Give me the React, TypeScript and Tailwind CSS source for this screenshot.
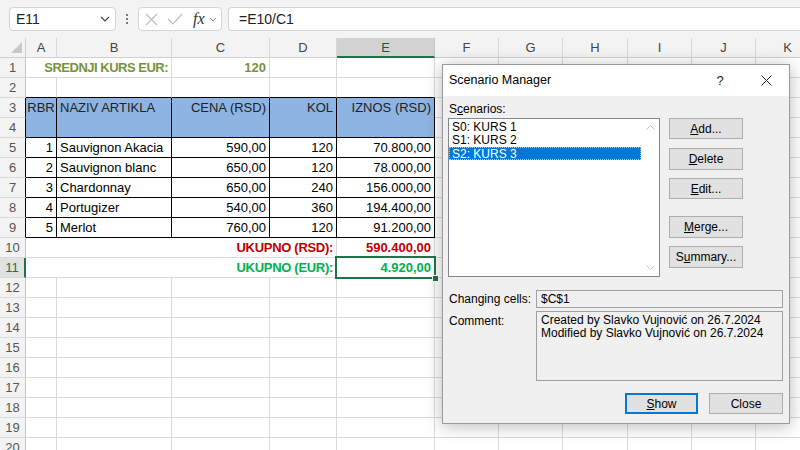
import React from "react";

const W: Record<string, string> = {
  A: "w-[31px]",
  B: "w-[115px]",
  C: "w-[98px]",
  D: "w-[67px]",
  E: "w-[98px]",
  F: "w-[64px]",
  G: "w-[64px]",
  H: "w-[65px]",
  I: "w-[64px]",
  J: "w-[64px]",
  K: "w-[64px]",
};
const COLS = ["A", "B", "C", "D", "E", "F", "G", "H", "I", "J", "K"];
const REST = ["F", "G", "H", "I", "J", "K"];

const g = "border-r-[#dadada]";
const gb = "border-b-[#dadada]";
const K = "border-r-black";
const Kb = "border-b-black";

function Cell({
  w,
  r = g,
  b = gb,
  h = "h-[20px]",
  cls = "",
  children,
}: {
  w: string;
  r?: string;
  b?: string;
  h?: string;
  cls?: string;
  children?: React.ReactNode;
}) {
  return (
    <div
      className={`shrink-0 border-r border-b leading-[19px] text-[13px] whitespace-nowrap overflow-hidden ${w} ${h} ${r} ${b} ${cls}`}
    >
      {children}
    </div>
  );
}

function RH({ n, r = "border-r-[#c6c6c6]", sel = false }: { n: number; r?: string; sel?: boolean }) {
  if (sel) {
    return (
      <div className="shrink-0 w-[26px] h-[20px] leading-[19px] border-b border-b-[#dadada] border-r-2 border-r-[#217346] bg-[#e1e1e1] text-[#217346] text-center text-[13px]">
        {n}
      </div>
    );
  }
  return (
    <div
      className={`shrink-0 w-[26px] h-[20px] leading-[19px] border-r border-b border-b-[#dadada] ${r} bg-[#f3f3f3] text-[#555] text-center text-[13px]`}
    >
      {n}
    </div>
  );
}

function Rest() {
  return (
    <>
      {REST.map((c) => (
        <Cell key={c} w={W[c]} />
      ))}
    </>
  );
}

const data = [
  ["1", "Sauvignon Akacia", "590,00", "120", "70.800,00"],
  ["2", "Sauvignon blanc", "650,00", "120", "78.000,00"],
  ["3", "Chardonnay", "650,00", "240", "156.000,00"],
  ["4", "Portugizer", "540,00", "360", "194.400,00"],
  ["5", "Merlot", "760,00", "120", "91.200,00"],
];

function Btn({ children, cls = "" }: { children: React.ReactNode; cls?: string }) {
  return (
    <div
      className={`w-[74px] flex items-center justify-center bg-[#e1e1e1] border border-[#adadad] text-[12px] text-black ${cls}`}
    >
      {children}
    </div>
  );
}

export default function App() {
  return (
    <div className="w-[800px] h-[450px] overflow-hidden relative bg-white font-['Liberation_Sans',Arial,sans-serif] text-black">
      {/* Formula bar */}
      <div className="h-[38px] bg-[#f3f3f3] flex items-center pl-[9px]">
        <div className="w-[107px] h-[24px] bg-white border border-[#d4d4d4] rounded-[4px] flex items-center justify-between pl-[6px] pr-[5px]">
          <span className="text-[14px] text-[#222]">E11</span>
          <svg width="10" height="6" viewBox="0 0 10 6">
            <polyline points="1,1 5,5 9,1" fill="none" stroke="#444" strokeWidth="1.2" />
          </svg>
        </div>
        <div className="w-[22px] flex flex-col items-center gap-[2px]">
          <div className="w-[2px] h-[2px] bg-[#555] rounded-full" />
          <div className="w-[2px] h-[2px] bg-[#555] rounded-full" />
          <div className="w-[2px] h-[2px] bg-[#555] rounded-full" />
        </div>
        <div className="w-[84px] h-[24px] bg-white border border-[#d4d4d4] rounded-[4px] flex items-center pl-[6px]">
          <svg width="13" height="13" viewBox="0 0 13 13">
            <line x1="1" y1="1" x2="12" y2="12" stroke="#bdbdbd" strokeWidth="1.2" />
            <line x1="12" y1="1" x2="1" y2="12" stroke="#bdbdbd" strokeWidth="1.2" />
          </svg>
          <svg width="16" height="12" viewBox="0 0 16 12" className="ml-[9px]">
            <polyline points="1,6 6,11 15,1" fill="none" stroke="#bdbdbd" strokeWidth="1.2" />
          </svg>
          <span className="ml-[10px] font-['Liberation_Serif',serif] italic text-[16px] text-[#333] leading-none">
            fx
          </span>
          <svg width="8" height="5" viewBox="0 0 8 5" className="ml-[4px]">
            <polyline points="1,1 4,4 7,1" fill="none" stroke="#888" strokeWidth="1" />
          </svg>
        </div>
        <div className="ml-[6px] flex-1 h-[24px] bg-white border border-r-0 border-[#d4d4d4] rounded-l-[4px] flex items-center pl-[10px]">
          <span className="text-[14px] text-[#222]">=E10/C1</span>
        </div>
      </div>

      {/* Column headers */}
      <div className="flex h-[20px]">
        <div className="shrink-0 w-[26px] h-[20px] bg-[#f3f3f3] border-r border-b border-r-[#d0d0d0] border-b-[#d0d0d0] relative">
          <svg width="26" height="20" viewBox="0 0 26 20" className="absolute left-0 top-0">
            <polygon points="11,15 22,15 22,4" fill="#c8c8c8" />
          </svg>
        </div>
        {COLS.map((c) =>
          c === "E" ? (
            <div
              key={c}
              className={`shrink-0 ${W[c]} h-[20px] bg-[#d2d2d2] border-r border-r-[#c8c8c8] border-b-2 border-b-[#217346] text-center text-[13px] leading-[19px] text-[#1f5a3a]`}
            >
              {c}
            </div>
          ) : (
            <div
              key={c}
              className={`shrink-0 ${W[c]} h-[20px] bg-[#f3f3f3] border-r border-b border-r-[#d8d8d8] border-b-[#d0d0d0] text-center text-[13px] leading-[19px] text-[#444]`}
            >
              {c}
            </div>
          )
        )}
      </div>

      {/* Row 1 */}
      <div className="flex">
        <RH n={1} />
        <Cell w="w-[146px]" cls="text-right pr-[3px] font-bold text-[#76923c] tracking-[-0.5px]">
          SREDNJI KURS EUR:
        </Cell>
        <Cell w={W.C} cls="text-right pr-[3px] font-bold text-[#76923c]">
          120
        </Cell>
        <Cell w={W.D} />
        <Cell w={W.E} />
        <Rest />
      </div>

      {/* Row 2 */}
      <div className="flex">
        <RH n={2} />
        <Cell w={W.A} b={Kb} />
        <Cell w={W.B} b={Kb} />
        <Cell w={W.C} b={Kb} />
        <Cell w={W.D} b={Kb} />
        <Cell w={W.E} b={Kb} />
        <Rest />
      </div>

      {/* Rows 3-4 merged */}
      <div className="flex">
        <div className="flex flex-col">
          <RH n={3} r="border-r-black" />
          <RH n={4} r="border-r-black" />
        </div>
        <Cell w={W.A} h="h-[40px]" r={K} b={Kb} cls="bg-[#8db4e2] text-center text-[#222]">
          RBR
        </Cell>
        <Cell w={W.B} h="h-[40px]" r={K} b={Kb} cls="bg-[#8db4e2] pl-[3px] text-[#222]">
          NAZIV ARTIKLA
        </Cell>
        <Cell w={W.C} h="h-[40px]" r={K} b={Kb} cls="bg-[#8db4e2] text-right pr-[3px] text-[#222]">
          CENA (RSD)
        </Cell>
        <Cell w={W.D} h="h-[40px]" r={K} b={Kb} cls="bg-[#8db4e2] text-right pr-[3px] text-[#222]">
          KOL
        </Cell>
        <Cell w={W.E} h="h-[40px]" r={K} b={Kb} cls="bg-[#8db4e2] text-right pr-[3px] text-[#222]">
          IZNOS (RSD)
        </Cell>
        {REST.map((c) => (
          <div key={c} className="flex flex-col">
            <Cell w={W[c]} />
            <Cell w={W[c]} />
          </div>
        ))}
      </div>

      {/* Data rows 5-9 */}
      {data.map((row, i) => (
        <div key={i} className="flex">
          <RH n={i + 5} r="border-r-black" />
          <Cell w={W.A} r={K} b={Kb} cls="text-right pr-[3px]">
            {row[0]}
          </Cell>
          <Cell w={W.B} r={K} b={Kb} cls="pl-[3px]">
            {row[1]}
          </Cell>
          <Cell w={W.C} r={K} b={Kb} cls="text-right pr-[3px]">
            {row[2]}
          </Cell>
          <Cell w={W.D} r={K} b={Kb} cls="text-right pr-[3px]">
            {row[3]}
          </Cell>
          <Cell w={W.E} r={K} b={Kb} cls="text-right pr-[3px]">
            {row[4]}
          </Cell>
          <Rest />
        </div>
      ))}

      {/* Row 10 */}
      <div className="flex">
        <RH n={10} />
        <Cell w="w-[311px]" cls="text-right pr-[3px] font-bold text-[#c00000] tracking-[-0.3px]">
          UKUPNO (RSD):
        </Cell>
        <Cell w={W.E} cls="text-right pr-[3px] font-bold text-[#c00000]">
          590.400,00
        </Cell>
        <Rest />
      </div>

      {/* Row 11 */}
      <div className="flex">
        <RH n={11} sel />
        <Cell w="w-[311px]" cls="text-right pr-[3px] font-bold text-[#00b050] tracking-[-0.3px]">
          UKUPNO (EUR):
        </Cell>
        <div className="relative shrink-0">
          <Cell w={W.E} cls="text-right pr-[3px] font-bold text-[#00b050]">
            4.920,00
          </Cell>
          <div className="absolute left-[-2px] top-[-2px] right-[-1px] bottom-[-1px] border-2 border-[#217346]" />
          <div className="absolute right-[-4px] bottom-[-4px] w-[7px] h-[7px] bg-[#217346] border border-white" />
        </div>
        <Rest />
      </div>

      {/* Rows 12-20 */}
      {[12, 13, 14, 15, 16, 17, 18, 19, 20].map((n) => (
        <div key={n} className="flex">
          <RH n={n} />
          {COLS.map((c) => (
            <Cell key={c} w={W[c]} />
          ))}
        </div>
      ))}

      {/* Scenario Manager dialog */}
      <div className="absolute left-[442px] top-[64px] w-[348px] bg-[#f0f0f0] border border-[#9a9a9a] shadow-[0_2px_16px_rgba(0,0,0,0.28)]">
        <div className="h-[31px] bg-white flex items-center pl-[6px]">
          <span className="text-[12.5px] text-black">Scenario Manager</span>
          <div className="ml-auto w-[46px] text-center text-[13px] text-[#222]">?</div>
          <div className="w-[46px] flex items-center justify-center">
            <svg width="11" height="11" viewBox="0 0 11 11">
              <line x1="0.5" y1="0.5" x2="10.5" y2="10.5" stroke="#222" strokeWidth="1" />
              <line x1="10.5" y1="0.5" x2="0.5" y2="10.5" stroke="#222" strokeWidth="1" />
            </svg>
          </div>
        </div>
        <div className="pl-[5px] pr-[6px] pb-[9px] text-[12px]">
          <div className="flex">
            <div className="flex flex-col pt-[4px]">
              <div className="h-[18px] leading-[18px] pl-[1px]">
                S<u>c</u>enarios:
              </div>
              <div className="w-[212px] h-[159px] bg-white border border-[#828790] flex">
                <div className="w-[192px] pt-[2px] flex flex-col">
                  <div className="h-[13px] leading-[13px] px-[3px]">S0: KURS 1</div>
                  <div className="h-[13px] leading-[13px] px-[3px]">S1: KURS 2</div>
                  <div className="h-[13px] leading-[13px] px-[2px] bg-[#0078d7] text-white border border-dotted border-[#9ec9f0]">
                    S2: KURS 3
                  </div>
                </div>
                <div className="flex-1 flex flex-col justify-between items-center pt-[6px] pb-[6px]">
                  <svg width="9" height="5" viewBox="0 0 9 5">
                    <polyline points="0.5,4.5 4.5,0.5 8.5,4.5" fill="none" stroke="#c0c0c0" strokeWidth="1" />
                  </svg>
                  <svg width="9" height="5" viewBox="0 0 9 5">
                    <polyline points="0.5,0.5 4.5,4.5 8.5,0.5" fill="none" stroke="#c0c0c0" strokeWidth="1" />
                  </svg>
                </div>
              </div>
            </div>
            <div className="ml-[9px] pt-[22px] flex flex-col">
              <Btn cls="h-[21px]">
                <span>
                  <u>A</u>dd...
                </span>
              </Btn>
              <Btn cls="h-[22px] mt-[9px]">
                <span>
                  <u>D</u>elete
                </span>
              </Btn>
              <Btn cls="h-[21px] mt-[8px]">
                <span>
                  <u>E</u>dit...
                </span>
              </Btn>
              <Btn cls="h-[22px] mt-[17px]">
                <span>
                  <u>M</u>erge...
                </span>
              </Btn>
              <Btn cls="h-[22px] mt-[8px]">
                <span>
                  S<u>u</u>mmary...
                </span>
              </Btn>
            </div>
          </div>

          <div className="flex mt-[13px] items-center">
            <div className="w-[88px] pl-[1px]">Changing cells:</div>
            <div className="w-[247px] h-[18px] border border-[#a0a0a0] pl-[4px] leading-[16px]">$C$1</div>
          </div>

          <div className="flex mt-[3px]">
            <div className="w-[88px] pl-[1px] pt-[1px]">Comment:</div>
            <div className="w-[247px] h-[70px] border border-[#a0a0a0] pl-[4px] pt-[2px] leading-[13px]">
              <div>Created by Slavko Vujnović on 26.7.2024</div>
              <div>Modified by Slavko Vujnović on 26.7.2024</div>
            </div>
          </div>

          <div className="flex justify-end mt-[12px] gap-[11px]">
            <div className="w-[73px] h-[21px] flex items-center justify-center bg-[#e1e1e1] border-2 border-[#0078d7]">
              <span>
                <u>S</u>how
              </span>
            </div>
            <Btn cls="h-[21px]">Close</Btn>
          </div>
        </div>
      </div>
    </div>
  );
}
